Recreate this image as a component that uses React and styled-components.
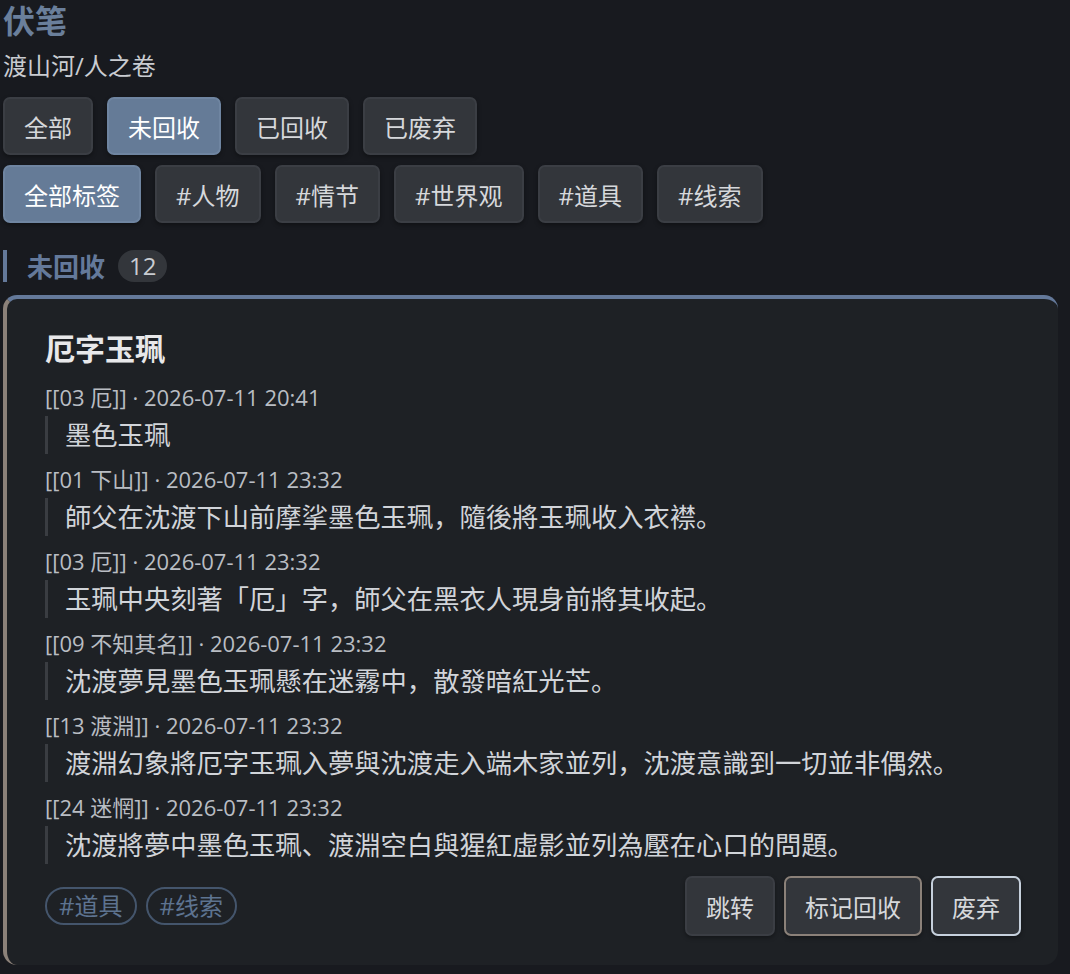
import React from "react";
import styled, { createGlobalStyle } from "styled-components";

const GlobalStyle = createGlobalStyle`
	html, body {
		margin: 0;
		padding: 0;
		background: #181a1f;
	}
	body {
		font-family: "Open Sans", "Noto Sans CJK SC", sans-serif;
		color: #d6d8db;
	}
`;

const Page = styled.div`
	padding: 1px 12px 10px 3px;
	min-height: 974px;
	box-sizing: border-box;
`;

const Title = styled.h1`
	margin: 0 0 9px;
	font-size: 32px;
	line-height: 40px;
	font-weight: 700;
	color: #6a7f9b;
`;

const Subtitle = styled.div`
	font-size: 24px;
	line-height: 32px;
	color: #c9ccd1;
	margin-bottom: 15px;
`;

const FilterRow = styled.div`
	display: flex;
	gap: 14px;
	margin-bottom: 10px;
`;

const FilterButton = styled.button`
	height: 58px;
	padding: 0 19px;
	border-radius: 7px;
	border: 2px solid ${(p) => (p.$active ? "#6f85a1" : "#3b3e44")};
	background: ${(p) => (p.$active ? "#657b97" : "#33363b")};
	color: ${(p) => (p.$active ? "#ffffff" : "#d6d8db")};
	font-family: inherit;
	font-size: 24px;
	box-shadow: 0 2px 4px rgba(0, 0, 0, 0.35);
	cursor: pointer;
`;

const SectionHeader = styled.div`
	display: flex;
	align-items: center;
	height: 32px;
	margin: 27px 0 13px;
	border-left: 4px solid #64799a;
	padding-left: 20px;
	gap: 13px;
`;

const SectionTitle = styled.span`
	font-size: 26px;
	font-weight: 700;
	color: #64799a;
`;

const CountBadge = styled.span`
	height: 32px;
	line-height: 32px;
	padding: 0 11px;
	border-radius: 16px;
	background: #33363b;
	color: #c9ccd1;
	font-size: 24px;
`;

const Card = styled.div`
	background: #1e2125;
	border-top: 4px solid #64799a;
	border-left: 4px solid #8b8179;
	border-radius: 14px;
	padding: 30px 37px 29px 38px;
`;

const CardTitle = styled.h2`
	margin: 0 0 13px;
	font-size: 30px;
	line-height: 40px;
	font-weight: 700;
	color: #e8e8ea;
`;

const Entry = styled.div`
	margin-bottom: 10px;
`;

const Meta = styled.div`
	font-size: 22px;
	line-height: 30px;
	color: #b9bdc3;
	margin-bottom: 4px;
`;

const Quote = styled.div`
	border-left: 3px solid #3a3d42;
	padding-left: 17px;
	font-size: 26.3px;
	line-height: 38px;
	color: #d1d4d9;
	white-space: nowrap;
`;

const Footer = styled.div`
	display: flex;
	justify-content: space-between;
	align-items: center;
	margin-top: 12px;
`;

const Chips = styled.div`
	display: flex;
	gap: 9px;
`;

const Chip = styled.span`
	height: 38px;
	line-height: 34px;
	box-sizing: border-box;
	padding: 0 12px;
	border: 2px solid #44556c;
	border-radius: 19px;
	color: #5d7390;
	font-size: 24px;
`;

const Actions = styled.div`
	display: flex;
	gap: 9px;
`;

const ActionButton = styled.button`
	height: 60px;
	padding: 0 19px;
	border-radius: 7px;
	border: 2px solid ${(p) => p.$border || "#3b3e44"};
	background: #33363b;
	color: #d6d8db;
	font-family: inherit;
	font-size: 24px;
	box-shadow: 0 2px 4px rgba(0, 0, 0, 0.35);
	cursor: pointer;
`;

const statuses = ["全部", "未回收", "已回收", "已废弃"];
const tags = ["全部标签", "#人物", "#情节", "#世界观", "#道具", "#线索"];

const entries = [
	{ ref: "[[03 厄]]", time: "2026-07-11 20:41", text: "墨色玉珮" },
	{ ref: "[[01 下山]]", time: "2026-07-11 23:32", text: "師父在沈渡下山前摩挲墨色玉珮，隨後將玉珮收入衣襟。" },
	{ ref: "[[03 厄]]", time: "2026-07-11 23:32", text: "玉珮中央刻著「厄」字，師父在黑衣人現身前將其收起。" },
	{ ref: "[[09 不知其名]]", time: "2026-07-11 23:32", text: "沈渡夢見墨色玉珮懸在迷霧中，散發暗紅光芒。" },
	{ ref: "[[13 渡淵]]", time: "2026-07-11 23:32", text: "渡淵幻象將厄字玉珮入夢與沈渡走入端木家並列，沈渡意識到一切並非偶然。" },
	{ ref: "[[24 迷惘]]", time: "2026-07-11 23:32", text: "沈渡將夢中墨色玉珮、渡淵空白與猩紅虛影並列為壓在心口的問題。" },
];

const App = () => {
	return (
		<Page>
			<GlobalStyle />
			<Title>伏笔</Title>
			<Subtitle>渡山河/人之卷</Subtitle>
			<FilterRow>
				{statuses.map((s) => (
					<FilterButton key={s} $active={s === "未回收"}>
						{s}
					</FilterButton>
				))}
			</FilterRow>
			<FilterRow>
				{tags.map((t) => (
					<FilterButton key={t} $active={t === "全部标签"}>
						{t}
					</FilterButton>
				))}
			</FilterRow>
			<SectionHeader>
				<SectionTitle>未回收</SectionTitle>
				<CountBadge>12</CountBadge>
			</SectionHeader>
			<Card>
				<CardTitle>厄字玉珮</CardTitle>
				{entries.map((e, i) => (
					<Entry key={i}>
						<Meta>
							{e.ref} · {e.time}
						</Meta>
						<Quote>{e.text}</Quote>
					</Entry>
				))}
				<Footer>
					<Chips>
						<Chip>#道具</Chip>
						<Chip>#线索</Chip>
					</Chips>
					<Actions>
						<ActionButton>跳转</ActionButton>
						<ActionButton $border="#8b8179">标记回收</ActionButton>
						<ActionButton $border="#c6d0dc">废弃</ActionButton>
					</Actions>
				</Footer>
			</Card>
		</Page>
	);
};

export default App;
